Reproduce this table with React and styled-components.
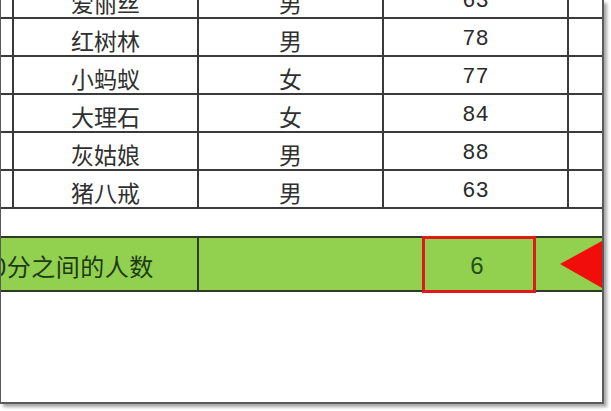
import React from "react";
import styled, { createGlobalStyle } from "styled-components";

const rows = [
  { name: "爱丽丝", sex: "男", score: "63" },
  { name: "红树林", sex: "男", score: "78" },
  { name: "小蚂蚁", sex: "女", score: "77" },
  { name: "大理石", sex: "女", score: "84" },
  { name: "灰姑娘", sex: "男", score: "88" },
  { name: "猪八戒", sex: "男", score: "63" },
];

const GlobalStyle = createGlobalStyle`
  html, body {
    margin: 0;
    padding: 0;
    background: #ffffff;
  }
  body {
    font-family: "Noto Sans CJK SC", "Liberation Sans", sans-serif;
  }
`;

const App = () => {
  return (
    <Page>
      <GlobalStyle />
      <Frame>
        <Sheet>
          {rows.map((r, i) => (
            <Row key={r.name} first={i === 0}>
              <Cell />
              <Cell>{r.name}</Cell>
              <Cell>{r.sex}</Cell>
              <NumCell>{r.score}</NumCell>
              <Cell last />
            </Row>
          ))}
        </Sheet>
        <Gap />
        <SumRow>
          <SumLabel>
            <LabelText>0分之间的人数</LabelText>
          </SumLabel>
          <SumSpacer />
          <ResultBox>6</ResultBox>
          <ArrowCell>
            <svg width="42" height="48" viewBox="0 0 42 48">
              <polygon points="0,23 42,0 42,47" fill="#f20d0d" />
            </svg>
          </ArrowCell>
        </SumRow>
      </Frame>
    </Page>
  );
};

const Page = styled.div`
  width: 611px;
  height: 411px;
  overflow: hidden;
  position: relative;
`;

const Frame = styled.div`
  width: 601px;
  height: 402px;
  border-left: 1px solid #5a5a5a;
  border-right: 2px solid #5a5a5a;
  border-bottom: 2px solid #5a5a5a;
  box-shadow: 3px 3px 3px rgba(0, 0, 0, 0.35);
  background: #ffffff;
  overflow: hidden;
  display: flex;
  flex-direction: column;
`;

const Sheet = styled.div`
  display: flex;
  flex-direction: column;
`;

const Row = styled.div`
  display: grid;
  grid-template-columns: 13px 185px 185px 185px 1fr;
  height: ${(p) => (p.first ? "19px" : "38px")};
  border-bottom: 2px solid #3a3a3a;
  box-sizing: border-box;
`;

const Cell = styled.div`
  display: flex;
  align-items: flex-end;
  justify-content: center;
  padding-bottom: 3px;
  overflow: hidden;
  border-right: ${(p) => (p.last ? "none" : "2px solid #3a3a3a")};
  font-family: "Noto Sans CJK SC", sans-serif;
  font-size: 23px;
  line-height: 1;
  color: #303030;
  white-space: nowrap;
`;

const NumCell = styled(Cell)`
  font-family: "Liberation Mono", "DejaVu Sans Mono", monospace;
  font-size: 22px;
  padding-bottom: 4px;
  color: #2a2a2a;
`;

const Gap = styled.div`
  height: 27px;
`;

const SumRow = styled.div`
  display: grid;
  grid-template-columns: 198px 223px 114px 1fr;
  height: 56px;
  background: #92d050;
  border-top: 2px solid #2f3a25;
  border-bottom: 2px solid #2f3a25;
  box-sizing: border-box;
`;

const SumLabel = styled.div`
  display: flex;
  align-items: center;
  border-right: 2px solid #2f3a25;
  overflow: hidden;
  padding-top: 4px;
`;

const LabelText = styled.span`
  margin-left: -8px;
  font-family: "Noto Sans CJK SC", sans-serif;
  font-size: 24px;
  letter-spacing: 0.5px;
  line-height: 1;
  color: #1e3a12;
  white-space: nowrap;
`;

const SumSpacer = styled.div``;

const ResultBox = styled.div`
  margin: -2px 0 -3px;
  border: 3px solid #e0191b;
  display: flex;
  align-items: center;
  justify-content: center;
  font-family: "Liberation Sans", sans-serif;
  font-size: 24px;
  color: #245016;
  padding: 2px 4px 0 0;
`;

const ArrowCell = styled.div`
  display: flex;
  align-items: center;
  justify-content: flex-end;
  padding-top: 2px;
`;

export default App;
